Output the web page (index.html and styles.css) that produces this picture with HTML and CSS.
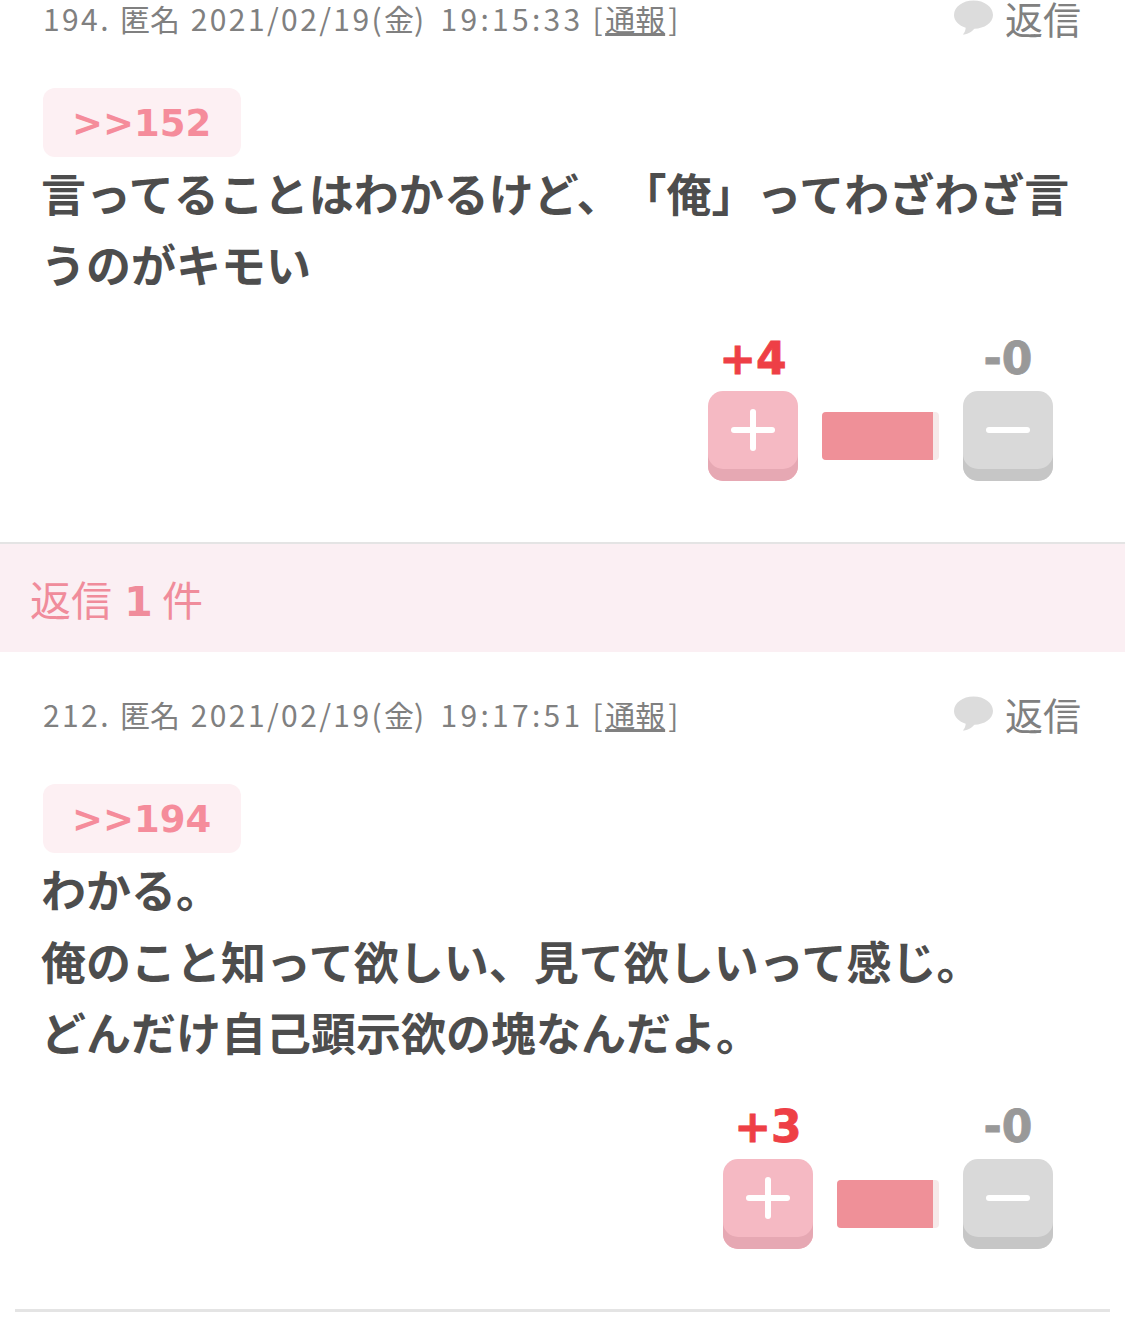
FILE: index.html
```html
<!DOCTYPE html>
<html lang="ja">
<head>
<meta charset="utf-8">
<title>返信</title>
<link rel="stylesheet" href="styles.css">
</head>
<body>
<article class="comment">
  <header class="head">
    <p class="meta"><span class="latin">194. </span>匿名 <span class="latin">2021/02/19(</span>金<span class="stamp">) 19:15:33</span><span class="latin"> [</span><a class="report">通報</a><span class="latin">]</span></p>
    <div class="reply">
      <svg class="bubble" viewBox="0 0 40 36"><path d="M20 0C31 0 40 6.500 40 15C40 23 31 29 21 29C18 32 14 35 9 35C11 33 12 30 12 28C5 26 0 21 0 15C0 6.500 9 0 20 0Z"/></svg>
      <span>返信</span>
    </div>
  </header>
  <div class="quote">&gt;&gt;152</div>
  <p class="text">言ってることはわかるけど、「俺」ってわざわざ言うのがキモい</p>
  <div class="votes">
    <div class="vote">
      <div class="count plus">+4</div>
      <div class="btn btn-plus"><span class="bar-h"></span><span class="bar-v"></span></div>
    </div>
    <div class="meter" style="width:117px"><div class="meter-fill" style="width:111px"></div></div>
    <div class="vote">
      <div class="count minus">-0</div>
      <div class="btn btn-minus"><span class="bar-h"></span></div>
    </div>
  </div>
</article>
<div class="band">返信 <b>1</b> 件</div>
<article class="comment comment-next">
  <header class="head">
    <p class="meta"><span class="latin">212. </span>匿名 <span class="latin">2021/02/19(</span>金<span class="stamp">) 19:17:51</span><span class="latin"> [</span><a class="report">通報</a><span class="latin">]</span></p>
    <div class="reply">
      <svg class="bubble" viewBox="0 0 40 36"><path d="M20 0C31 0 40 6.500 40 15C40 23 31 29 21 29C18 32 14 35 9 35C11 33 12 30 12 28C5 26 0 21 0 15C0 6.500 9 0 20 0Z"/></svg>
      <span>返信</span>
    </div>
  </header>
  <div class="quote">&gt;&gt;194</div>
  <p class="text">わかる。<br>俺のこと知って欲しい、見て欲しいって感じ。<br>どんだけ自己顕示欲の塊なんだよ。</p>
  <div class="votes">
    <div class="vote">
      <div class="count plus">+3</div>
      <div class="btn btn-plus"><span class="bar-h"></span><span class="bar-v"></span></div>
    </div>
    <div class="meter" style="width:102px"><div class="meter-fill" style="width:96px"></div></div>
    <div class="vote">
      <div class="count minus">-0</div>
      <div class="btn btn-minus"><span class="bar-h"></span></div>
    </div>
  </div>
</article>
<hr class="rule">
</body>
</html>
```
FILE: styles.css
```css
* { box-sizing: border-box; }
html, body { margin: 0; padding: 0; background: #fff; }
body {
  font-family: "Noto Sans CJK JP", "Noto Sans", sans-serif;
  color: #4d4d4d;
  overflow: hidden;
  height: 1331px;
  text-spacing-trim: space-all;
}
p { margin: 0; }
.comment { padding: 0 44px 61px 43px; }
.comment-next { padding-top: 44px; padding-bottom: 60px; }
.head { display: flex; justify-content: space-between; align-items: flex-start; height: 40px; }
.meta { font-size: 30px; line-height: 37px; color: #808080; white-space: nowrap; word-spacing: 4px; }
.latin { letter-spacing: 2.4px; word-spacing: 0; }
.stamp { letter-spacing: 3.3px; word-spacing: 3px; }
.report { text-decoration: underline; margin-right: 3px; }
.reply { display: flex; align-items: flex-start; gap: 12px; font-size: 38px; line-height: 36px; color: #808080; }
.bubble { width: 39px; height: 36px; fill: #dcdcdc; }
.quote {
  width: 198px;
  height: 69px;
  margin-top: 48px;
  padding-left: 29px;
  border-radius: 12px;
  background: #fdf0f3;
  color: #f58c9b;
  font-family: "DejaVu Sans", sans-serif;
  font-weight: 700;
  font-size: 37px;
  line-height: 71px;
}
.text {
  margin: 0 0 0 -2px;
  font-size: 45px;
  font-weight: 700;
  line-height: 71.33px;
  color: #4d4d4d;
}
.votes { display: flex; justify-content: flex-end; align-items: flex-end; margin-top: 37.6px; padding-right: 28px; }
.vote { display: flex; flex-direction: column; align-items: center; width: 90px; }
.count {
  height: 42px;
  margin-bottom: 12px;
  font-family: "DejaVu Sans", sans-serif;
  font-weight: 700;
  font-size: 44px;
  line-height: 43px;
  white-space: nowrap;
  -webkit-text-stroke: 0.8px currentColor;
}
.plus { color: #ee3f46; }
.minus { color: #999; }
.btn { position: relative; width: 90px; height: 90px; border-radius: 15px; }
.btn-plus { background: #f5b9c3; box-shadow: inset 0 -12px 0 #e6a8b3; }
.btn-minus { background: #d9d9d9; box-shadow: inset 0 -12px 0 #c6c6c6; }
.bar-h, .bar-v { position: absolute; background: #fff; border-radius: 3px; }
.bar-h { left: 23px; top: 36px; width: 44px; height: 6px; }
.bar-v { left: 42px; top: 18px; width: 6px; height: 42px; }
.meter { height: 48px; margin: 0 24px 21px; background: #f6e9e9; border-radius: 4px; overflow: hidden; }
.meter-fill { height: 100%; background: #ef9098; }
.band {
  height: 110px;
  padding-left: 30px;
  border-top: 2px solid #e4e4e4;
  background: #fbeff3;
  color: #f08c9b;
  font-size: 41px;
  line-height: 108px;
}
.band b { font-family: "DejaVu Sans", sans-serif; font-weight: 700; margin-left: 3px; }
.rule { height: 3px; margin: 0 15px; border: 0; background: #e4e4e4; }
```
